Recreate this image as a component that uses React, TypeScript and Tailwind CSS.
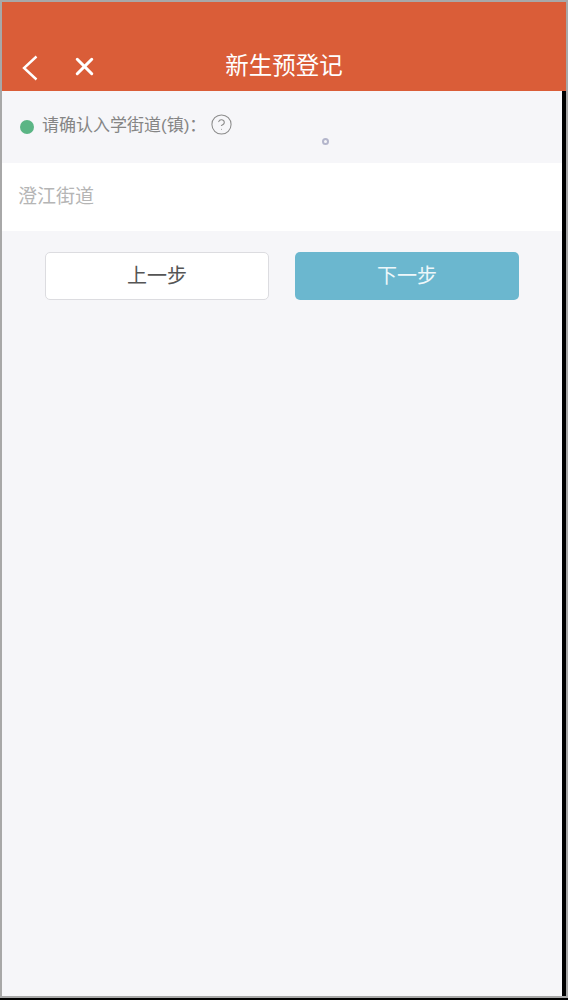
import { X, CircleHelp } from 'lucide-react'

const FONT = "font-['Liberation_Sans','Noto_Sans_CJK_SC',sans-serif]"

export default function App() {
  return (
    <div className={`w-[568px] h-[1000px] bg-black ${FONT}`}>
      <div className="h-[998px] border-2 border-[#a8a8a8] bg-black flex flex-col">
        {/* header */}
        <header className="relative h-[89px] shrink-0 bg-[#da5d38] flex items-end pb-[8px] text-white">
          <svg className="w-[18px] h-[28px] ml-[19px] mb-[1px]" viewBox="0 0 18 28" fill="none" stroke="currentColor" strokeWidth="2.4">
            <path d="M15.5 2.5 3 14l12.5 11.5" />
          </svg>
          <X className="w-[29px] h-[29px] ml-[31px] mb-[2px]" strokeWidth={2.5} />
          <h1 className="absolute inset-x-0 bottom-[10px] text-center text-[23.5px] leading-[30px] font-normal">新生预登记</h1>
        </header>

        <main className="flex-1 mr-[4px] bg-[#f6f6f9] flex flex-col">
          <div className="relative h-[72px] shrink-0 flex items-start pt-[22px] pl-[18px]">
            <span className="w-[14px] h-[14px] mt-[7px] rounded-full bg-[#5bb585]" />
            <span className="ml-[8px] text-[17px] leading-[26px] text-[#858585]">请确认入学街道(镇)：</span>
            <CircleHelp className="w-[23px] h-[23px] ml-[4px] mt-[0px] text-[#8c8c8c]" strokeWidth={1.1} />
            <span className="absolute left-[320px] top-[47px] w-[7px] h-[7px] rounded-full border-2 border-[#b4b6cc]" />
          </div>

          <div className="h-[68px] shrink-0 bg-white flex items-center pl-[16px] text-[19px] text-[#b5b5b5]">澄江街道</div>

          <div className="flex gap-[26px] pl-[43px] pt-[21px]">
            <button type="button" className="w-[224px] h-[48px] rounded-[5px] bg-white border border-[#dcdce0] text-[20px] text-[#555555]">上一步</button>
            <button type="button" className="w-[224px] h-[48px] rounded-[5px] bg-[#6bb7cf] text-[20px] text-[#eef7fa]">下一步</button>
          </div>
        </main>
      </div>
    </div>
  )
}
